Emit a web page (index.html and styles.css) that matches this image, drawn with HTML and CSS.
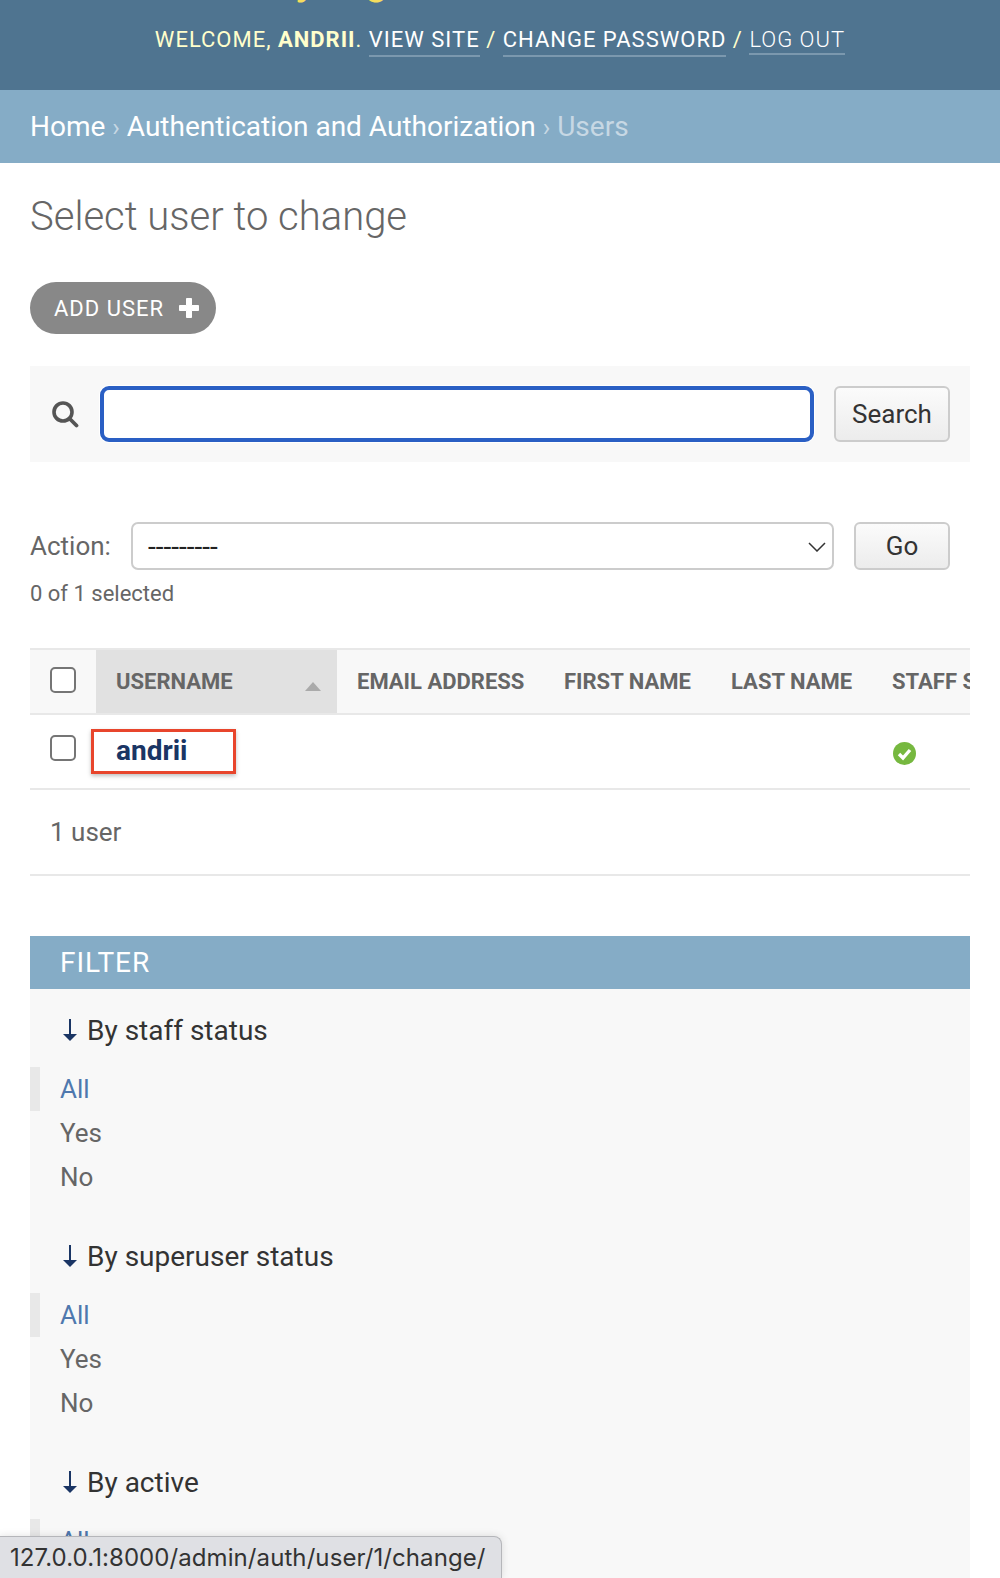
FILE: index.html
```html
<!DOCTYPE html>
<html lang="en">
<head>
    <meta charset="UTF-8">
    <meta name="viewport" content="width=device-width, initial-scale=1.0">
    <title>Select user to change</title>
    <link rel="stylesheet" href="styles.css">
</head>
<body>

    <div class="page">
        <div class="header">
            <div class="branding">Django administration</div>
            <div class="user-tools">
                WELCOME, <strong>ANDRII</strong>.
                <a href="#" class="tool-link">VIEW SITE</a> /
                <a href="#" class="tool-link">CHANGE PASSWORD</a> /
                <a href="#" class="tool-link logout">LOG OUT</a>
            </div>
        </div>

        <div class="breadcrumbs">
            <a href="#">Home</a> <span class="sep">›</span>
            <a href="#">Authentication and Authorization</a> <span class="sep">›</span>
            <span class="current">Users</span>
        </div>

        <div class="content">
            <h1>Select user to change</h1>

            <a href="#" class="add-user">
                ADD USER
                <svg width="22" height="22" viewBox="0 0 22 22"><path d="M8.5 1.5h5v7h7v5h-7v7h-5v-7h-7v-5h7z" fill="#fff" stroke="#fff" stroke-linejoin="round"/></svg>
            </a>

            <div class="toolbar">
                <svg class="search-icon" width="28" height="28" viewBox="0 0 28 28"><circle cx="12" cy="12" r="9" fill="none" stroke="#555" stroke-width="3.6"/><path d="M18.5 18.5l7 7" stroke="#555" stroke-width="3.8" stroke-linecap="round"/></svg>
                <input type="text" class="search-input">
                <button class="btn search-btn">Search</button>
            </div>

            <div class="actions">
                <label>Action:</label>
                <div class="select-wrap">
                    <select>
                        <option>---------</option>
                    </select>
                    <svg class="chevron" width="18" height="10" viewBox="0 0 18 10"><path d="M1 1l8 8 8-8" fill="none" stroke="#333" stroke-width="1.5"/></svg>
                </div>
                <button class="btn go-btn">Go</button>
            </div>
            <div class="selected-count">0 of 1 selected</div>

            <div class="results">
                <table>
                    <tr>
                        <th class="check-col"><input type="checkbox"></th>
                        <th class="sorted">USERNAME<span class="sort-arrow"></span></th>
                        <th class="email-col">EMAIL ADDRESS</th>
                        <th class="first-col">FIRST NAME</th>
                        <th class="last-col">LAST NAME</th>
                        <th class="staff-col">STAFF STATUS</th>
                    </tr>
                    <tr>
                        <td class="check-col"><input type="checkbox"></td>
                        <td class="username">
                            <a href="#">andrii</a>
                            <span class="highlight"></span>
                        </td>
                        <td></td>
                        <td></td>
                        <td></td>
                        <td class="staff-cell">
                            <svg width="23" height="23" viewBox="0 0 23 23"><circle cx="11.5" cy="11.5" r="11.5" fill="#76b83f"/><path d="M6 12l4 4 7-8" fill="none" stroke="#fff" stroke-width="3.4"/></svg>
                        </td>
                    </tr>
                </table>
            </div>
            <div class="paginator">1 user</div>

            <div class="filter">
                <h2>FILTER</h2>

                <div class="filter-group">
                    <h3><svg width="16" height="24" viewBox="0 0 16 24"><path d="M8 1v19" stroke="#1a3564" stroke-width="2"/><path d="M1 16h14l-7 7z" fill="#1a3564"/></svg> By staff status</h3>
                    <ul>
                        <li class="selected"><a href="#">All</a></li>
                        <li><a href="#">Yes</a></li>
                        <li><a href="#">No</a></li>
                    </ul>
                </div>

                <div class="filter-group">
                    <h3><svg width="16" height="24" viewBox="0 0 16 24"><path d="M8 1v19" stroke="#1a3564" stroke-width="2"/><path d="M1 16h14l-7 7z" fill="#1a3564"/></svg> By superuser status</h3>
                    <ul>
                        <li class="selected"><a href="#">All</a></li>
                        <li><a href="#">Yes</a></li>
                        <li><a href="#">No</a></li>
                    </ul>
                </div>

                <div class="filter-group">
                    <h3><svg width="16" height="24" viewBox="0 0 16 24"><path d="M8 1v19" stroke="#1a3564" stroke-width="2"/><path d="M1 16h14l-7 7z" fill="#1a3564"/></svg> By active</h3>
                    <ul>
                        <li class="selected"><a href="#">All</a></li>
                        <li><a href="#">Yes</a></li>
                        <li><a href="#">No</a></li>
                    </ul>
                </div>
            </div>
        </div>

        <!-- Browser link preview -->
        <div class="status-bar">127.0.0.1:8000/admin/auth/user/1/change/</div>
    </div>

</body>
</html>
```

FILE: styles.css
```css
body {
    margin: 0;
    font-family: Roboto, "Liberation Sans", sans-serif;
    color: #333;
    background: #fff;
}

a {
    text-decoration: none;
}

.page {
    position: relative;
    height: 1578px;
    overflow: hidden;
}

/* Header */
.header {
    height: 90px;
    background: #4f7490;
    display: flex;
    flex-direction: column;
    justify-content: flex-end;
    align-items: center;
    box-sizing: border-box;
    padding-bottom: 33px;
}

.branding {
    font-size: 48px;
    line-height: 56px;
    font-weight: 300;
    color: #f5dd5d;
    margin-bottom: 22px;
}

.user-tools {
    font-size: 22px;
    line-height: 28px;
    font-weight: 400;
    letter-spacing: 1px;
    color: #ffc;
    white-space: nowrap;
}

.user-tools strong {
    font-weight: 700;
}

.tool-link {
    color: #fff;
    font-weight: 400;
    display: inline-block;
    padding-bottom: 1px;
    border-bottom: 2px solid #7b98ae;
}

.logout {
    font-weight: 300;
    line-height: 26px;
    padding-bottom: 0;
}

/* Breadcrumbs */
.breadcrumbs {
    height: 73px;
    box-sizing: border-box;
    background: #85acc6;
    color: #c7d8e4;
    font-size: 28px;
    font-weight: 400;
    line-height: 73px;
    padding-left: 30px;
    white-space: nowrap;
}

.breadcrumbs a {
    color: #fff;
}

.sep {
    font-size: 25px;
}

/* Main content */
.content {
    padding: 0 30px;
}

h1 {
    margin: 0;
    padding-top: 29px;
    font-size: 40px;
    line-height: 50px;
    font-weight: 300;
    color: #666;
}

.add-user {
    display: inline-flex;
    align-items: center;
    gap: 14px;
    height: 52px;
    box-sizing: border-box;
    margin-top: 40px;
    padding: 0 16px 0 24px;
    border-radius: 26px;
    background: #888;
    color: #fff;
    font-size: 22px;
    letter-spacing: 1px;
}

.toolbar {
    display: flex;
    align-items: center;
    height: 96px;
    box-sizing: border-box;
    margin-top: 32px;
    padding: 0 20px 0 21px;
    background: #f8f8f8;
}

.search-icon {
    flex: none;
    margin-right: 21px;
}

.search-input {
    flex: 1;
    height: 56px;
    box-sizing: border-box;
    border: 4px solid #2a5fc4;
    border-radius: 9px;
    background: #fff;
    box-shadow: 0 0 0 1px #fff;
    outline: none;
}

.btn {
    height: 56px;
    box-sizing: border-box;
    border: 2px solid #ccc;
    border-radius: 6px;
    background: linear-gradient(#fbfbfb, #ececec);
    color: #333;
    font-family: Roboto, sans-serif;
    font-size: 26px;
    padding: 0;
}

.search-btn {
    width: 116px;
    margin-left: 20px;
}

.actions {
    display: flex;
    align-items: center;
    height: 48px;
    margin-top: 60px;
    padding-right: 20px;
}

.actions label {
    width: 101px;
    flex: none;
    font-size: 26px;
    color: #666;
}

.select-wrap {
    position: relative;
    flex: 1;
}

select {
    display: block;
    appearance: none;
    width: 100%;
    height: 48px;
    box-sizing: border-box;
    border: 2px solid #ccc;
    border-radius: 7px;
    background: #fff;
    padding: 0 15px;
    color: #222;
    font-family: Roboto, sans-serif;
    font-size: 28px;
}

.chevron {
    position: absolute;
    right: 8px;
    top: 20px;
}

.go-btn {
    width: 96px;
    height: 48px;
    margin-left: 20px;
}

.selected-count {
    margin-top: 10px;
    font-size: 22px;
    line-height: 28px;
    color: #666;
}

/* Results table */
.results {
    margin-top: 40px;
    overflow: hidden;
}

table {
    width: 1040px;
    table-layout: fixed;
    border-collapse: collapse;
}

th {
    height: 65px;
    box-sizing: border-box;
    background: #f8f8f8;
    border-top: 2px solid #e8e8e8;
    border-bottom: 2px solid #e8e8e8;
    padding: 0 20px;
    text-align: left;
    font-size: 22px;
    font-weight: 700;
    color: #666;
    white-space: nowrap;
}

td {
    height: 75px;
    box-sizing: border-box;
    border-bottom: 2px solid #e8e8e8;
    padding: 0 20px;
    vertical-align: top;
}

.check-col {
    width: 66px;
}

th.sorted {
    position: relative;
    width: 241px;
    background: #e1e1e1;
}

.email-col {
    width: 207px;
}

.first-col {
    width: 167px;
}

.last-col {
    width: 161px;
}

.sort-arrow {
    position: absolute;
    right: 16px;
    top: 32px;
    border-left: 8px solid transparent;
    border-right: 8px solid transparent;
    border-bottom: 9px solid #aaa;
}

input[type="checkbox"] {
    appearance: none;
    display: block;
    width: 26px;
    height: 26px;
    margin: 0;
    box-sizing: border-box;
    border: 2px solid #757575;
    border-radius: 5px;
    background: #fff;
}

th input[type="checkbox"] {
    margin-top: -4px;
}

td input[type="checkbox"] {
    margin-top: 20px;
}

.username {
    position: relative;
    padding-top: 19px;
    font-size: 28px;
    line-height: 34px;
    font-weight: 700;
}

.username a {
    color: #1a3564;
}

/* Red box drawn over the screenshot */
.highlight {
    position: absolute;
    left: -5px;
    top: 14px;
    width: 145px;
    height: 45px;
    box-sizing: border-box;
    border: 3px solid #e8452c;
    box-shadow: 0 2px 4px rgba(0, 0, 0, 0.25);
}

.staff-cell {
    padding: 27px 0 0 21px;
}

.paginator {
    height: 86px;
    box-sizing: border-box;
    border-bottom: 2px solid #e8e8e8;
    padding: 0 20px;
    font-size: 26px;
    line-height: 84px;
    color: #666;
}

/* Filter */
.filter {
    margin-top: 60px;
    background: #f8f8f8;
}

.filter h2 {
    margin: 0;
    height: 53px;
    padding-left: 30px;
    background: #85acc6;
    color: #fff;
    font-size: 28px;
    line-height: 53px;
    font-weight: 400;
    letter-spacing: 1px;
}

.filter-group {
    margin-bottom: 16px;
}

.filter-group h3 {
    display: flex;
    align-items: center;
    gap: 9px;
    margin: 0;
    height: 78px;
    box-sizing: border-box;
    padding: 4px 0 0 32px;
    font-size: 28px;
    font-weight: 400;
    color: #333;
}

.filter-group ul {
    margin: 0;
    padding: 0;
    list-style: none;
}

.filter-group li {
    height: 44px;
    box-sizing: border-box;
    padding-left: 30px;
    font-size: 26px;
    line-height: 45px;
}

.filter-group li a {
    color: #666;
}

.filter-group li.selected {
    border-left: 10px solid #e8e8e8;
    padding-left: 20px;
    line-height: 44px;
}

.filter-group li.selected a {
    color: #4f78ae;
}

/* Status bubble */
.status-bar {
    position: absolute;
    left: -1px;
    bottom: 0;
    height: 42px;
    box-sizing: border-box;
    padding: 0 15px 0 10px;
    border: 1px solid #b5b6ba;
    border-bottom: none;
    border-radius: 0 8px 0 0;
    background: #dfe0e4;
    box-shadow: 0 0 8px rgba(0, 0, 0, 0.12);
    color: #333;
    font-family: Inter, "Liberation Sans", sans-serif;
    font-size: 24px;
    letter-spacing: 0.08px;
    line-height: 42px;
    white-space: nowrap;
}
```
